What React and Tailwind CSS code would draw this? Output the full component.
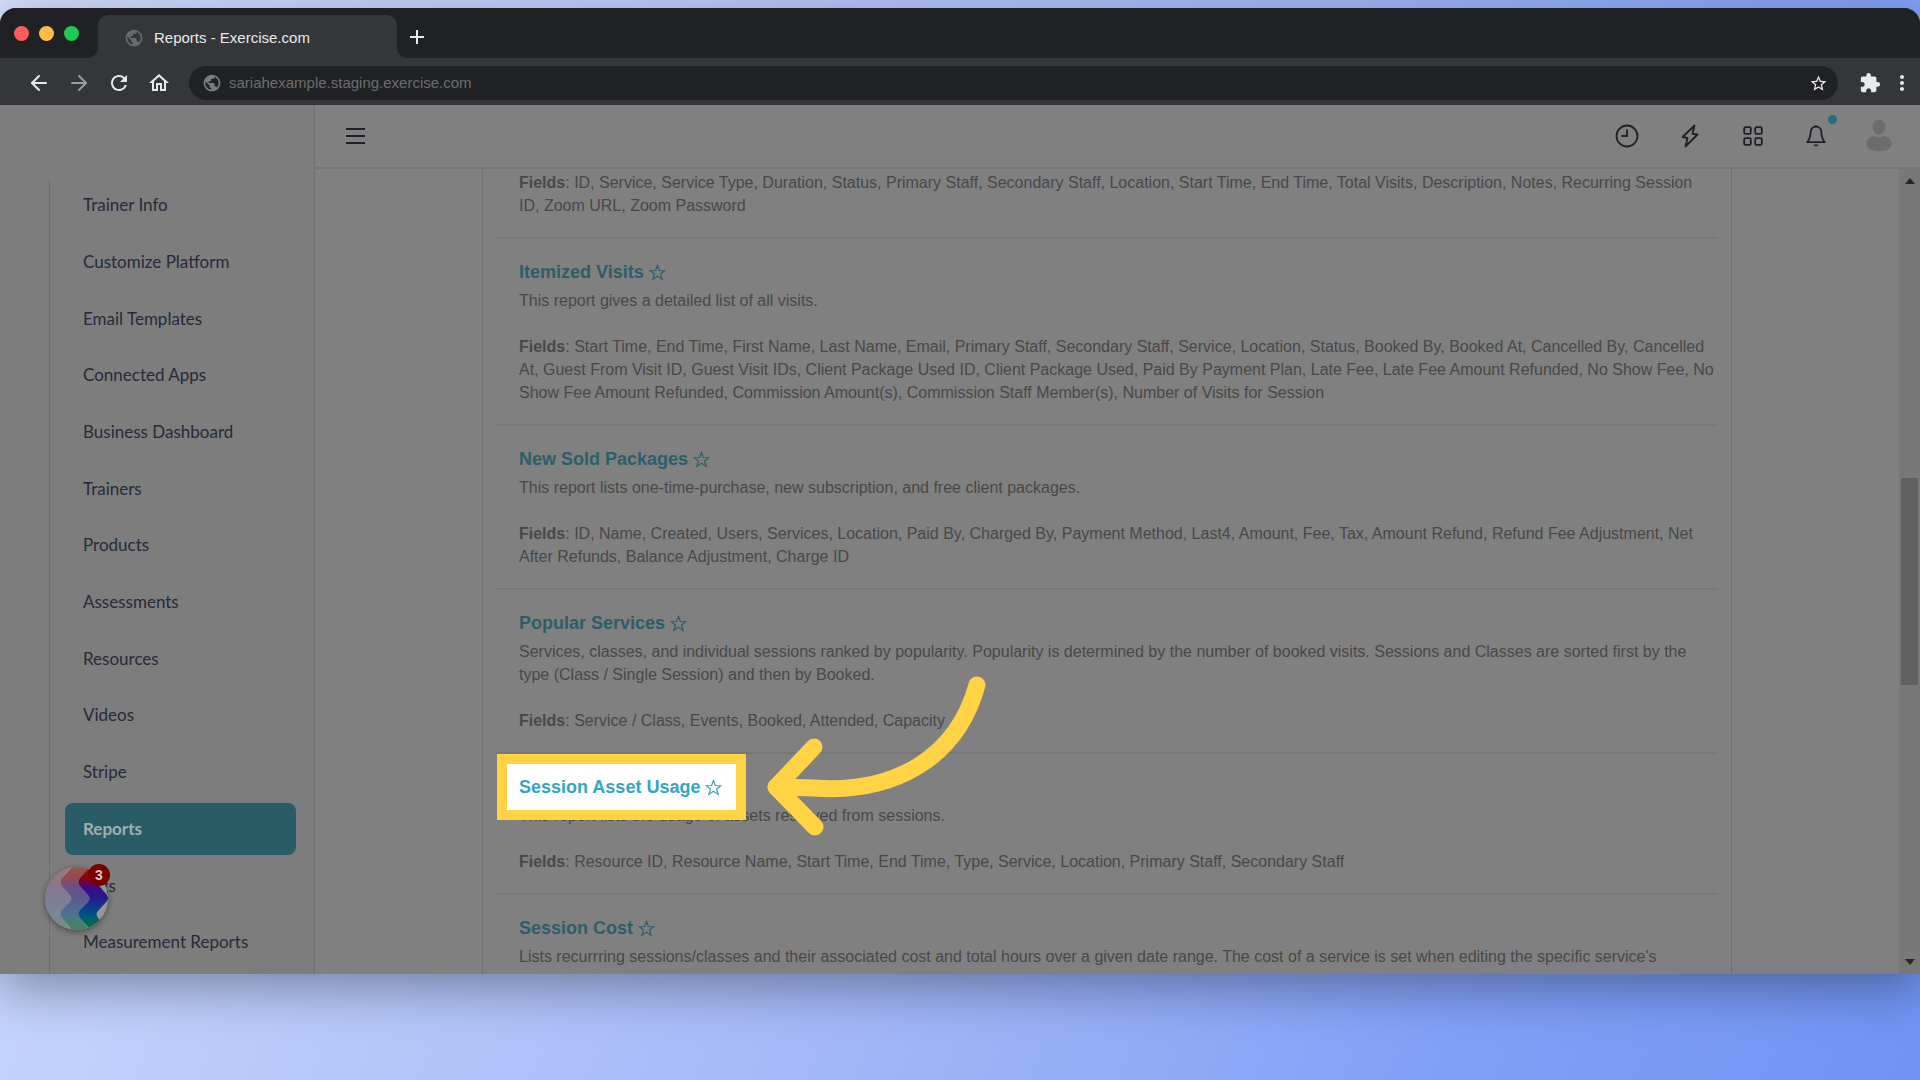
import React from 'react';
import { ArrowLeft, ArrowRight } from 'lucide-react';
import { MdRefresh, MdOutlineHome, MdPublic, MdStarBorder, MdExtension, MdMoreVert, MdAdd } from 'react-icons/md';

const NAV_ITEMS = [
    'Trainer Info',
    'Customize Platform',
    'Email Templates',
    'Connected Apps',
    'Business Dashboard',
    'Trainers',
    'Products',
    'Assessments',
    'Resources',
    'Videos',
    'Stripe',
    'Reports',
    'Tags',
    'Measurement Reports'
];

const REPORTS = [
    {
        fields: 'ID, Service, Service Type, Duration, Status, Primary Staff, Secondary Staff, Location, Start Time, End Time, Total Visits, Description, Notes, Recurring Session ID, Zoom URL, Zoom Password'
    },
    {
        title: 'Itemized Visits',
        description: 'This report gives a detailed list of all visits.',
        fields: 'Start Time, End Time, First Name, Last Name, Email, Primary Staff, Secondary Staff, Service, Location, Status, Booked By, Booked At, Cancelled By, Cancelled At, Guest From Visit ID, Guest Visit IDs, Client Package Used ID, Client Package Used, Paid By Payment Plan, Late Fee, Late Fee Amount Refunded, No Show Fee, No Show Fee Amount Refunded, Commission Amount(s), Commission Staff Member(s), Number of Visits for Session'
    },
    {
        title: 'New Sold Packages',
        description: 'This report lists one-time-purchase, new subscription, and free client packages.',
        fields: 'ID, Name, Created, Users, Services, Location, Paid By, Charged By, Payment Method, Last4, Amount, Fee, Tax, Amount Refund, Refund Fee Adjustment, Net After Refunds, Balance Adjustment, Charge ID'
    },
    {
        title: 'Popular Services',
        description: 'Services, classes, and individual sessions ranked by popularity. Popularity is determined by the number of booked visits. Sessions and Classes are sorted first by the type (Class / Single Session) and then by Booked.',
        fields: 'Service / Class, Events, Booked, Attended, Capacity'
    },
    {
        title: 'Session Asset Usage',
        description: 'This report lists the usage of assets reserved from sessions.',
        fields: 'Resource ID, Resource Name, Start Time, End Time, Type, Service, Location, Primary Staff, Secondary Staff',
        highlighted: true
    },
    {
        title: 'Session Cost',
        description: "Lists recurrring sessions/classes and their associated cost and total hours over a given date range. The cost of a service is set when editing the specific service's"
    }
];

function StarIcon() {
    return (
        <svg viewBox="0 0 18 18" className="size-[17px]" fill="none" stroke="currentColor" strokeWidth="1.3" strokeLinejoin="miter">
            <path d="M9 1.6 L11 6.9 L16.8 7.1 L12.2 10.6 L13.9 16.3 L9 13 L4.1 16.3 L5.8 10.6 L1.2 7.1 L7 6.9 Z" />
        </svg>
    );
}

function TabStrip() {
    return (
        <div className="flex h-[50px] shrink-0 bg-[#35363a]">
            <div className="flex w-[98px] shrink-0 items-center gap-[10px] rounded-br-[10px] bg-[#202124] pl-[14px]">
                <button aria-label="Close" className="size-[15px] rounded-full bg-[#ff5c5c]" />
                <button aria-label="Minimize" className="size-[15px] rounded-full bg-[#ffbd4c]" />
                <button aria-label="Maximize" className="size-[15px] rounded-full bg-[#1fc956]" />
            </div>
            <div className="w-[299px] shrink-0 bg-[#202124] pt-[7px]">
                <div className="flex h-full items-center gap-[10px] rounded-t-[10px] bg-[#35363a] pt-[3px] pl-[26px] text-[15px] text-[#e8e9eb]">
                    <MdPublic className="size-5 text-[#696a6e]" />
                    Reports - Exercise.com
                </div>
            </div>
            <div className="flex flex-1 items-center rounded-bl-[10px] bg-[#202124] pt-2 pl-2">
                <button aria-label="New tab">
                    <MdAdd className="size-6 text-[#e8e9eb]" />
                </button>
            </div>
        </div>
    );
}

function Toolbar() {
    return (
        <div className="flex h-[47px] shrink-0 items-center bg-[#35363a] pt-[3px] pr-[6px] pl-[27px] text-[#e8e9eb]">
            <div className="flex w-[162px] shrink-0 items-center gap-4">
                <button aria-label="Back"><ArrowLeft className="size-6" strokeWidth={2} /></button>
                <button aria-label="Forward"><ArrowRight className="size-6 text-[#9b9c9f]" strokeWidth={2} /></button>
                <button aria-label="Reload"><MdRefresh className="size-6" /></button>
                <button aria-label="Home"><MdOutlineHome className="size-6" /></button>
            </div>
            <div className="flex h-[34px] flex-1 items-center gap-[7px] rounded-full bg-[#202124] pr-[10px] pl-[13px]">
                <MdPublic className="size-5 text-[#7b7c80]" />
                <input
                    aria-label="Address"
                    className="flex-1 bg-transparent text-[15px] text-[#6c6d70] outline-none"
                    defaultValue="sariahexample.staging.exercise.com"
                />
                <button aria-label="Bookmark"><MdStarBorder className="size-[19px]" /></button>
            </div>
            <button aria-label="Extensions" className="ml-[21px]"><MdExtension className="size-[22px]" /></button>
            <button aria-label="Browser menu" className="ml-[9px]"><MdMoreVert className="size-6" /></button>
        </div>
    );
}

function Sidebar() {
    return (
        <aside className="relative flex w-[315px] shrink-0 flex-col border-r border-[#6f6f6f] bg-[#7d7d7d] pt-[74px] pl-[49px]">
            <nav className="flex flex-1 flex-col justify-between border-l border-[#6f6f6f] pr-[18px] pb-[6px] pl-[15px]">
                {NAV_ITEMS.map((item) => (
                    <a
                        key={item}
                        href="#"
                        className={
                            item === 'Reports'
                                ? 'flex h-[52px] items-center rounded-lg bg-[#2a5c67] pl-[18px] font-["Lato"] text-[17px] font-bold text-[#a3adaf]'
                                : 'flex h-[52px] items-center pl-[18px] font-["Lato"] text-[17px] text-[#272a3b]'
                        }
                    >
                        {item}
                    </a>
                ))}
            </nav>
            <ChatLauncher />
        </aside>
    );
}

function ChatLauncher() {
    return (
        <button aria-label="Open messages, 3 unread" className="absolute bottom-[44px] left-[45px] size-[63px] rounded-full shadow-[0_2px_6px_rgba(0,0,0,0.4)]">
            <svg viewBox="0 0 63 63" className="size-full">
                <defs>
                    <linearGradient id="launcherBand" x1="0" y1="0" x2="0" y2="1">
                        <stop offset="0" stopColor="#a01800" />
                        <stop offset="0.17" stopColor="#8c0010" />
                        <stop offset="0.34" stopColor="#3a0a85" />
                        <stop offset="0.52" stopColor="#20208c" />
                        <stop offset="0.74" stopColor="#00508a" />
                        <stop offset="0.9" stopColor="#006a50" />
                        <stop offset="1" stopColor="#006a2c" />
                    </linearGradient>
                    <clipPath id="launcherClip">
                        <circle cx="31.5" cy="31.5" r="31.5" />
                    </clipPath>
                </defs>
                <g clipPath="url(#launcherClip)">
                    <rect width="63" height="63" fill="#959595" />
                    <path d="M0 0 H25 L17 11 Q14 15 17 19 L25 28 Q28 31.5 25 35 L17 43 Q14 47 17 51 L25 63 H0 Z" fill="url(#launcherBand)" opacity="0.2" />
                    <path d="M27 0 H46 L35 11 Q32 15 35 19 L43 28 Q46 31.5 43 35 L35 43 Q32 47 35 51 L45 63 H27 L17 51 Q14 47 17 43 L25 35 Q28 31.5 25 28 L17 19 Q14 15 17 11 Z" fill="url(#launcherBand)" opacity="0.5" />
                    <path d="M45 0 H56 L50 14 L62 28 Q64 31.5 62 34 L53 44 Q50 47 53 51 L60 58 L46 63 L35 51 Q32 47 35 43 L43 35 Q46 31.5 43 28 L35 19 Q32 15 35 11 Z" fill="url(#launcherBand)" />
                </g>
            </svg>
            <span className="absolute -top-[3px] left-[43px] flex size-[22px] items-center justify-center rounded-full bg-[#7a0000] text-sm font-bold text-[#c8c8c8]">
                3
            </span>
        </button>
    );
}

function TopBar() {
    return (
        <header className="flex h-16 shrink-0 items-center justify-between border-b-2 border-[#757575] pr-7 pl-[31px] text-[#1d2024]">
            <button aria-label="Toggle menu">
                <svg viewBox="0 0 20 18" className="h-[18px] w-5" stroke="currentColor" strokeWidth="2">
                    <path d="M0 2 H19 M0 9 H19 M0 16 H19" />
                </svg>
            </button>
            <div className="flex items-center gap-[37px]">
                <button aria-label="Recent">
                    <svg viewBox="0 0 26 26" className="size-[26px]" fill="none" stroke="currentColor" strokeWidth="1.8">
                        <circle cx="13" cy="13" r="10.5" />
                        <path d="M13 6.5 V13 H7.5" />
                    </svg>
                </button>
                <button aria-label="Quick actions">
                    <svg viewBox="0 0 26 26" className="size-[26px]" fill="none" stroke="currentColor" strokeWidth="1.8" strokeLinejoin="round">
                        <path d="M17.5 2.5 L5.5 14 L10.5 15 L8.5 23.5 L20.5 11.5 L15.5 10.8 Z" />
                    </svg>
                </button>
                <button aria-label="Apps">
                    <svg viewBox="0 0 26 26" className="size-[26px]" fill="none" stroke="currentColor" strokeWidth="1.8">
                        <rect x="4.2" y="4.2" width="6.6" height="6.6" rx="1.4" />
                        <rect x="15.2" y="4.2" width="6.6" height="6.6" rx="1.4" />
                        <rect x="4.2" y="15.2" width="6.6" height="6.6" rx="1.4" />
                        <rect x="15.2" y="15.2" width="6.6" height="6.6" rx="1.4" />
                    </svg>
                </button>
                <button aria-label="Notifications" className="relative">
                    <svg viewBox="0 0 26 26" className="size-[26px]" fill="none" stroke="currentColor" strokeWidth="1.8" strokeLinejoin="round">
                        <path d="M13 3.6 C9.4 3.6 7.6 6.4 7.6 9.6 C7.6 14.4 6 17 4.2 19.2 H21.8 C20 17 18.4 14.4 18.4 9.6 C18.4 6.4 16.6 3.6 13 3.6 Z" />
                        <path d="M13 2 V4" />
                        <path d="M10.6 21.6 A2.5 2.5 0 0 0 15.4 21.6 Z" fill="currentColor" stroke="none" />
                    </svg>
                    <span className="absolute -top-2 left-[25px] size-[9px] rounded-full bg-[#2a6d7a]" />
                </button>
                <button aria-label="Account">
                    <svg viewBox="0 0 26 34" className="h-[34px] w-[26px]" fill="#6c6c6c">
                        <ellipse cx="13" cy="8" rx="6.5" ry="7.5" />
                        <path d="M0.5 25.5 C0.5 19 6 16.5 9 17.5 Q13 19.5 17 17.5 C20 16.5 25.5 19 25.5 25.5 C25.5 34.5 0.5 34.5 0.5 25.5 Z" />
                    </svg>
                </button>
            </div>
        </header>
    );
}

// Pen-drawn arrow that points at the highlighted report title
function PointerArrow() {
    return (
        <svg
            viewBox="0 0 220 165"
            className="pointer-events-none absolute -top-[101px] left-[247px] z-20 h-[165px] w-[220px]"
            fill="none"
            stroke="#ffd343"
            strokeWidth="17"
            strokeLinecap="round"
            strokeLinejoin="round"
        >
            <path d="M211 10 C191 83 128 119 48 113 L10 112" />
            <path d="M48 72 L10 112 L49 152" />
        </svg>
    );
}

function ReportRow({ report }) {
    const { title, description, fields, highlighted } = report;

    return (
        <article className="border-b-2 border-[#787878] pr-1 pb-5 pl-6 last:border-b-0">
            {title && (
                <div className="flex pt-[22px] pb-[5px]">
                    <div className={highlighted ? 'relative flex items-center gap-[5px] text-[#33a7c0]' : 'flex items-center gap-[5px] text-[#2a5f6a]'}>
                        {highlighted && (
                            <>
                                <span className="absolute -top-[22px] -right-6 -left-[22px] h-[66px] border-[10px] border-[#ffd343] bg-white" />
                                <PointerArrow />
                            </>
                        )}
                        <h2 className="relative text-lg leading-[23px] font-bold">
                            <a href="#">{title}</a>
                        </h2>
                        <button aria-label={`Add ${title} to favorites`} className="relative">
                            <StarIcon />
                        </button>
                    </div>
                </div>
            )}
            {description && <p>{description}</p>}
            {fields && (
                <p className={title ? 'mt-[23px]' : 'pt-[2px]'}>
                    <b>Fields</b>{`: ${fields}`}
                </p>
            )}
        </article>
    );
}

function ScrollBar() {
    return (
        <div className="flex w-[21px] shrink-0 flex-col items-center bg-[#787878] py-[9px]">
            <svg viewBox="0 0 10 6" className="h-[6px] w-[10px]" fill="#262626">
                <path d="M0 6 L5 0 L10 6 Z" />
            </svg>
            <div className="flex w-full flex-1 flex-col px-[2px]">
                <div className="grow-[294]" />
                <div className="grow-[207] bg-[#606060]" />
                <div className="grow-[274]" />
            </div>
            <svg viewBox="0 0 10 6" className="h-[6px] w-[10px]" fill="#262626">
                <path d="M0 0 L5 6 L10 0 Z" />
            </svg>
        </div>
    );
}

export default function App() {
    return (
        <div className='flex h-screen flex-col bg-[linear-gradient(115deg,#d3dffe_0%,#bfcefb_25%,#a2b7f7_55%,#819ff6_80%,#7093f2_100%)] pt-2 pb-[106px] font-["Liberation_Sans",Arial,sans-serif]'>
            <div className="flex min-h-0 flex-1 flex-col overflow-hidden rounded-t-2xl shadow-[0_14px_50px_rgba(0,0,0,0.35)]">
                <TabStrip />
                <Toolbar />
                <div className="flex min-h-0 flex-1 bg-[#808080]">
                    <Sidebar />
                    <div className="flex min-w-0 flex-1 flex-col">
                        <TopBar />
                        <div className="flex min-h-0 flex-1">
                            <main className="flex-1 overflow-hidden pr-[167px] pl-[167px]">
                                <div className="min-h-full border-x border-[#6f6f6f] pr-[13px] pl-3 text-base leading-[23px] text-[#484848]">
                                    {REPORTS.map((report, index) => (
                                        <ReportRow key={index} report={report} />
                                    ))}
                                </div>
                            </main>
                            <ScrollBar />
                        </div>
                    </div>
                </div>
            </div>
        </div>
    );
}
